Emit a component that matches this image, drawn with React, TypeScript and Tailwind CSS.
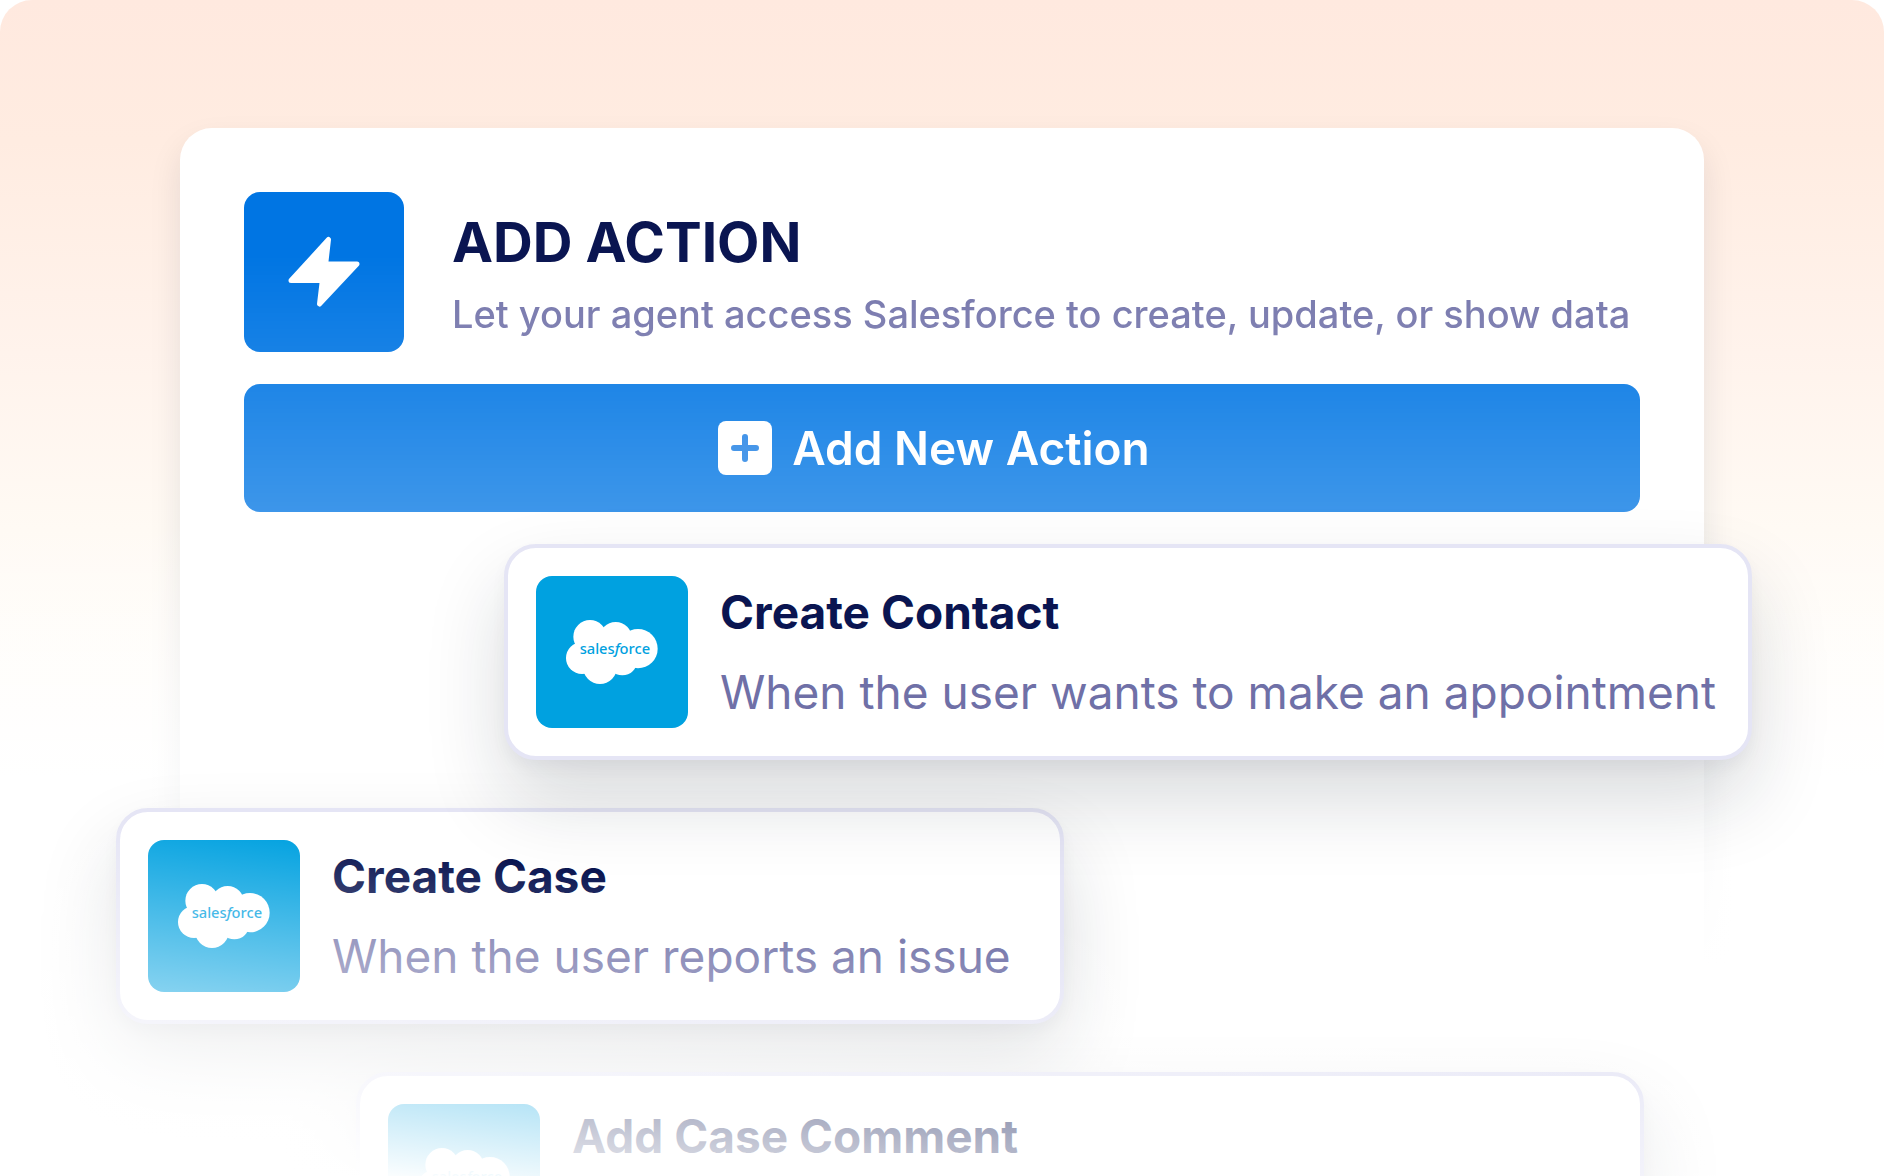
type Action = {
  title: string;
  description?: string;
  className: string;
};

const actions: Action[] = [
  {
    title: "Create Contact",
    description: "When the user wants to make an appointment",
    className: "z-10 ml-[260px] -mr-28",
  },
  {
    title: "Create Case",
    description: "When the user reports an issue",
    className: "-ml-32 mr-[576px]",
  },
  {
    title: "Add Case Comment",
    className: "ml-28 -mr-1",
  },
];

const BoltIcon = () => (
  <svg viewBox="0 0 72 72" className="size-18" aria-hidden="true">
    <path
      d="M40.5 3.5 37.7 28H69L31.5 68l2.8-23.5H3Z"
      fill="#fff"
      stroke="#fff"
      strokeWidth="5"
      strokeLinejoin="round"
    />
  </svg>
);

const PlusIcon = () => (
  <svg viewBox="0 0 54 54" className="size-[54px]" aria-hidden="true">
    <rect width="54" height="54" rx="8" fill="#fff" />
    <path
      d="M27 16v22M16 27h22"
      stroke="#1f80e4"
      strokeWidth="6"
      strokeLinecap="round"
    />
  </svg>
);

const SalesforceLogo = () => (
  <svg
    viewBox="0 0 456 456"
    className="size-38 shrink-0 rounded-2xl bg-[#00a1e0]"
    role="img"
    aria-label="Salesforce"
  >
    <g fill="#fff">
      <circle cx="162" cy="182" r="50" />
      <circle cx="239" cy="187" r="49" />
      <circle cx="306" cy="218" r="59" />
      <circle cx="138" cy="246" r="48" />
      <circle cx="192" cy="273" r="51" />
      <circle cx="259" cy="253" r="45" />
      <path d="M130 190h180v70H150Z" />
    </g>
    <text
      x="131"
      y="233"
      fill="#00a1e0"
      fontSize="44"
      fontWeight="500"
      className="font-['Noto_Sans',sans-serif]"
    >
      sales<tspan fontStyle="italic">f</tspan>orce
    </text>
  </svg>
);

const ActionCard = ({ title, description, className }: Action) => (
  <li
    className={`relative flex gap-8 rounded-[32px] border-4 border-[#e5e5f5] bg-white p-7 shadow-[0_8px_16px_rgba(20,28,45,0.04),0_40px_80px_rgba(20,28,45,0.16)] ${className}`}
  >
    <SalesforceLogo />
    <div
      className={`flex flex-col gap-4 whitespace-nowrap ${description ? "pt-1" : ""}`}
    >
      <h3 className="text-[46px] leading-16 font-bold text-[#0a1551]">
        {title}
      </h3>
      {description && (
        <p className="text-[46px] leading-16 text-[#6f70a7]">{description}</p>
      )}
    </div>
  </li>
);

const App = () => {
  return (
    <main className="relative h-screen overflow-hidden rounded-t-[32px] bg-[linear-gradient(180deg,#ffe9df_0%,#ffece1_12%,#fff3ec_30%,#fffaf4_45%,#fff_66%)] px-[180px] pt-32 font-[Inter,sans-serif]">
      <section className="h-full rounded-t-[32px] bg-white px-16 pt-16 shadow-[0_16px_32px_rgba(20,28,45,0.1)]">
        <div className="mask-[linear-gradient(180deg,#000_20%,rgba(0,0,0,0.76)_100%)]">
          <header className="flex items-center gap-12">
            <div className="flex size-40 shrink-0 items-center justify-center rounded-2xl bg-[#0075e3]">
              <BoltIcon />
            </div>
            <div className="flex flex-col gap-2 pt-3 whitespace-nowrap">
              <h2 className="text-[55px] leading-16 font-bold text-[#0a1551]">
                ADD ACTION
              </h2>
              <p className="text-[38px] leading-16 font-medium text-[#7677ac]">
                Let your agent access Salesforce to create, update, or show data
              </p>
            </div>
          </header>
          <button
            type="button"
            className="mt-8 flex h-32 w-full items-center justify-center gap-5 rounded-2xl bg-[#0075e3] pr-4 text-[46px] font-semibold text-white"
          >
            <PlusIcon />
            Add New Action
          </button>
        </div>

        {/* dissolves the panel edges behind the cards */}
        <div className="pointer-events-none absolute inset-0 bg-[linear-gradient(180deg,rgba(255,255,255,0)_44%,#fff_82%)]" />

        <ul className="mt-8 flex flex-col gap-12">
          {actions.map((action) => (
            <ActionCard key={action.title} {...action} />
          ))}
        </ul>
      </section>

      {/* fades the list out towards the bottom left */}
      <div className="pointer-events-none absolute inset-0 z-20 bg-[linear-gradient(187deg,rgba(255,255,255,0)_73%,#fff_97%)]" />
    </main>
  );
};

export default App;
